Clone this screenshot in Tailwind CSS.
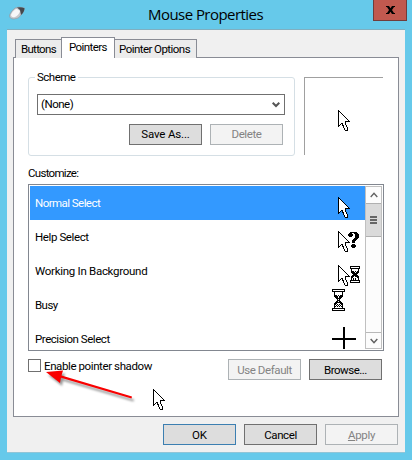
<!DOCTYPE html>
<html lang="en">
<head>
<meta charset="utf-8">
<title>Mouse Properties</title>
<script src="https://cdn.jsdelivr.net/npm/@tailwindcss/browser@4"></script>
</head>
<body class="w-[412px] h-[460px] overflow-hidden bg-[#66c9ea] font-['Roboto',sans-serif] text-[11.5px] leading-[14px] text-black">
<svg class="hidden">
  <defs>
    <symbol id="cursor" viewBox="0 0 13 22"><path d="M.5.5V16.5L4 13.2 7.2 20.2 9.5 20.2 9.5 18.5 7 12.5V11.5H11.5Z" fill="#fff" stroke="#000" stroke-width="1" shape-rendering="crispEdges"/></symbol>
    <symbol id="hourglass" viewBox="0 0 13 22"><g fill="none" stroke="#000" shape-rendering="crispEdges"><path d="M.5.5H12.5V2.5H.5ZM.5 19.5H12.5V21.5H.5Z" fill="#fff"/><path d="M2.5 3V6.5L5.5 9.5V12.5L2.5 15.5V19M10.5 3V6.5L7.5 9.5V12.5L10.5 15.5V19" stroke-width="1.6"/><path d="M4 6.5H9M5 7.5H8M6.5 9V14M5 15.5H8M4 16.5H9M3 17.5H10" stroke-dasharray="1 1"/></g></symbol>
    <symbol id="hourglass-small" viewBox="0 0 10 17"><g fill="none" stroke="#000" shape-rendering="crispEdges"><path d="M0 .5H10M0 2.5H10M0 14.5H10M0 16.5H10M.5 0V3M9.5 0V3M.5 14V17M9.5 14V17"/><path d="M1.5 3V5.5L4 8V9L1.5 11.5V14M8.5 3V5.5L6 8V9L8.5 11.5V14" stroke-width="1.5"/><path d="M3 5.5H7M4 6.5H6M5 10V12M3 12.5H7M3 13.5H7" stroke-dasharray="1 1"/></g></symbol>
  </defs>
</svg>
<div class="relative w-[412px] h-[460px] pl-[7px]">
  <header class="flex h-[29px] items-start">
    <svg class="mt-[6px] ml-[1px] shrink-0" width="19" height="15" viewBox="0 0 19 15">
      <path d="M1.5 9Q3 5 7 2Q11 .5 14 1.5L16.5 2Q16 6 13 9Q11 13 6 13Q1 13 1.5 9Z" fill="#c5c7cc" stroke="#8799a2" stroke-width=".6"/>
      <path d="M9 1.5Q13 .5 16.5 2.3Q16.5 6 13 9L12 4Z" fill="#45484d"/><path d="M3 8.5Q6 3 9 3L12 5Q11 9 7 11Q3 12 3 8.5Z" fill="#f6f6f8"/>
    </svg>
    <h1 class="ml-[121px] mt-[4px] w-[118px] whitespace-nowrap font-['Open_Sans',sans-serif] text-[15px] leading-[20px] tracking-[-0.55px]">Mouse Properties</h1>
    <button class="ml-[107px] flex h-[21px] w-[34px] items-center justify-center border border-t-0 border-[#713c3b] bg-[#c1594f]">
      <svg width="9" height="8" viewBox="0 0 9 8"><path d="M0 0H3L4.5 2.3 6 0H9V1H8L6 4 8 7H9V8H6L4.5 5.7 3 8H0V7H1L3 4 1 1H0Z"/></svg>
    </button>
  </header>
  <main class="h-[424px] w-[398px] border-t border-b border-t-[#80afc0] border-b-[#91c5d7] bg-[#f0f0f0] px-[6px] pt-[7px]">
    <nav class="relative z-10 flex h-[21px] items-end pl-[2px]">
      <div class="h-[19px] w-[46px] border border-r-0 border-b-0 border-[#898c95] bg-[#ececec] pl-[5px] pt-[2px] tracking-[-0.7px] whitespace-nowrap">Buttons</div>
      <div class="h-[21px] w-[54px] border border-b-0 border-[#898c95] bg-white pl-[7px] pt-[2px] tracking-[-0.6px] whitespace-nowrap">Pointers</div>
      <div class="h-[19px] w-[82px] border border-l-0 border-b-0 border-[#898c95] bg-[#ececec] pl-[4px] pt-[2px] tracking-[-0.55px] whitespace-nowrap">Pointer Options</div>
    </nav>
    <section class="-mt-px h-[360px] w-[386px] border border-[#898c95] bg-white pl-[14px] pt-[12px]">
      <div class="flex h-[86px]">
        <fieldset class="h-[88px] w-[268px]">
          <div class="relative mt-[7px] h-[79px] w-[267px] rounded-[3px] border border-[#d5dfe5] pl-[8px] pt-[16px]">
            <div class="absolute left-[6px] top-[-8px] bg-white pl-[2px] pr-[3px] tracking-[-0.5px]">Scheme</div>
            <div class="flex h-[21px] w-[248px] items-center border border-[#707070] pl-[3px] pr-[4px]">
              <span class="-mt-px tracking-[-0.5px]">(None)</span>
              <svg class="ml-auto" width="8" height="6" viewBox="0 0 8 6"><path d="M.7.8 4 4 7.3.8" fill="none" stroke="#555" stroke-width="2"/></svg>
            </div>
            <div class="mt-[9px] ml-[92px] flex gap-[8px]">
              <button class="h-[21px] w-[73px] border border-[#707070] bg-[#ddd] pb-px tracking-[-0.15px]">Save As...</button>
              <button class="h-[21px] w-[73px] border border-[#adb2b5] bg-[#f3f3f3] pb-px tracking-[-0.4px] text-[#838383]">Delete</button>
            </div>
          </div>
        </fieldset>
        <div class="mt-[7px] ml-[8px] h-[78px] w-[79px] border-t border-l border-[#a0a0a0] pl-[33px] pt-[32px]"><svg width="13" height="22"><use href="#cursor"/></svg></div>
      </div>
      <div class="mt-[10px] h-[18px] tracking-[-0.7px]">Customize:</div>
      <div class="flex h-[167px] w-[356px] border border-[#828790] p-px">
        <div class="h-[163px] w-[335px] overflow-hidden">
          <div class="flex h-[34px] items-center bg-[#3399ff] pl-[5px] tracking-[-0.55px] text-white">Normal Select<svg class="ml-auto mr-[14px] mb-px self-end" width="13" height="22"><use href="#cursor"/></svg></div>
          <div class="flex h-[34px] items-center pl-[5px] tracking-[-0.4px]">Help Select
            <div class="ml-auto mr-[5px] mb-px self-end flex h-[22px] w-[22px]"><svg class="shrink-0" width="13" height="22"><use href="#cursor"/></svg>
              <svg class="-ml-[3px] shrink-0" width="12" height="18" viewBox="0 0 12 18" shape-rendering="crispEdges"><path d="M0 5V3H1V2H2V1H9V2H10V3H11V7H10V8H9V9H8V10H7V12H4V9H5V8H6V7H7V3H6V2H4V3H5V5H4V6H1V5ZM4 13H7V14H8V16H7V17H4V16H3V14H4Z"/></svg></div></div>
          <div class="flex h-[34px] items-center pl-[5px] tracking-[-0.28px]">Working In Background
            <div class="ml-auto mr-[5px] mb-px self-end flex h-[22px] w-[22px]"><svg class="shrink-0" width="13" height="22"><use href="#cursor"/></svg><svg class="-ml-px mt-px shrink-0" width="10" height="17"><use href="#hourglass-small"/></svg></div></div>
          <div class="flex h-[34px] items-center pl-[5px] tracking-[-0.55px]">Busy<svg class="ml-auto mr-[20px] mt-px self-start" width="13" height="22"><use href="#hourglass"/></svg></div>
          <div class="flex h-[34px] items-center pl-[5px] tracking-[-0.46px]">Precision Select<svg class="ml-auto mr-[9px] mt-[5px] self-start" width="24" height="22" viewBox="0 0 24 22"><path d="M11 0H13V11H24V13H13V22H11V13H0V11H11Z"/></svg></div>
        </div>
        <div class="flex h-[163px] w-[17px] flex-col justify-between border border-[#c0c0c0] bg-[#fcfcfc]">
          <div>
            <div class="flex h-[16px] items-center justify-center"><svg width="8" height="6" viewBox="0 0 8 6"><path d="M.7 5 4 1.3 7.3 5" fill="none" stroke="#606060" stroke-width="1.3"/></svg></div>
            <div class="flex h-[34px] flex-col items-center justify-center gap-px border-t border-b border-[#b0b0b0] bg-[#dadada]"><i class="h-[2px] w-[7px] bg-[#666]"></i><i class="h-[2px] w-[7px] bg-[#666]"></i><i class="h-[2px] w-[7px] bg-[#666]"></i></div>
          </div>
          <div class="flex h-[16px] items-center justify-center border-t border-[#b8b8b8]"><svg width="8" height="6" viewBox="0 0 8 6"><path d="M.7 1 4 4.7 7.3 1" fill="none" stroke="#606060" stroke-width="1.5"/></svg></div>
        </div>
      </div>
      <div class="mt-[8px] flex h-[21px] w-[354px]">
        <div class="h-[13px] w-[13px] border border-[#707070]"></div>
        <span class="ml-[3px] whitespace-nowrap tracking-[-0.4px]">Enable pointer shadow</span>
        <div class="ml-auto flex gap-[8px]">
          <button class="h-[21px] w-[73px] border border-[#adb2b5] bg-[#f3f3f3] tracking-[-0.4px] text-[#838383]">Use Default</button>
          <button class="h-[21px] w-[73px] border border-[#707070] bg-[#ddd] tracking-[-0.5px]">Browse...</button>
        </div>
      </div>
    </section>
    <footer class="mt-[7px] flex justify-end gap-[8px] pr-px">
      <button class="h-[21px] w-[73px] border border-[#3c7fb1] bg-[#ddd]">OK</button>
      <button class="h-[21px] w-[73px] border border-[#707070] bg-[#ddd] tracking-[-0.4px]">Cancel</button>
      <button class="h-[21px] w-[73px] border border-[#adb2b5] bg-[#f3f3f3] tracking-[-0.3px] text-[#838383]"><u>A</u>pply</button>
    </footer>
  </main>
  <svg class="absolute left-[153px] top-[389px] z-20" width="13" height="22"><use href="#cursor"/></svg>
  <svg class="absolute left-[40px] top-[365px] z-20 drop-shadow-[2px_3px_1px_rgba(0,0,0,0.4)]" width="100" height="40" viewBox="40 365 100 40"><path d="M46 372 63 370.5 61.5 375.5 132 396.5 131.5 398.5 61 377.8 60 383Z" fill="#f90000"/></svg>
</div>
</body>
</html>
